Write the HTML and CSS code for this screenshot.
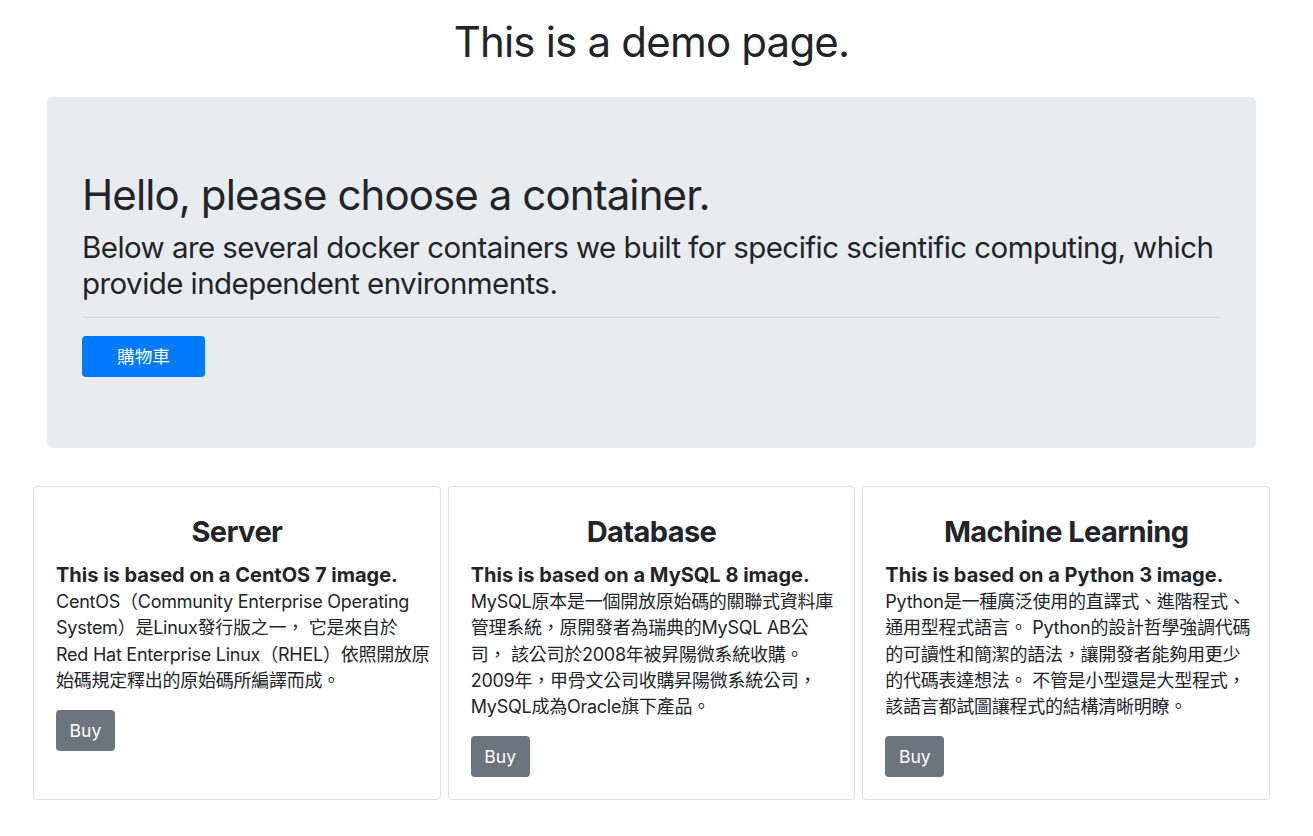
FILE: index.html
```html
<!DOCTYPE html>
<html lang="zh-Hant">
<head>
<meta charset="utf-8">
<title>Demo</title>
<link rel="stylesheet" href="styles.css">
</head>
<body>
<div class="page">
  <h1 class="page-title">This is a demo page.</h1>
  <section class="jumbotron">
    <h1 class="hero-title">Hello, please choose a container.</h1>
    <p class="lead">Below are several docker containers we built for specific scientific computing, which provide independent environments.</p>
    <hr class="divider">
    <a class="btn btn-primary" href="#">購物車</a>
  </section>
  <div class="cards">
    <div class="card">
      <h3 class="card-title">Server</h3>
      <h5 class="card-subtitle">This is based on a CentOS 7 image.</h5>
      <p class="card-text">CentOS（Community Enterprise Operating<br>System）是Linux發行版之一， 它是來自於<br>Red Hat Enterprise Linux（RHEL）依照開放原<br>始碼規定釋出的原始碼所編譯而成。</p>
      <a class="btn btn-secondary" href="#">Buy</a>
    </div>
    <div class="card">
      <h3 class="card-title">Database</h3>
      <h5 class="card-subtitle">This is based on a MySQL 8 image.</h5>
      <p class="card-text">MySQL原本是一個開放原始碼的關聯式資料庫<br>管理系統，原開發者為瑞典的MySQL AB公<br>司， 該公司於2008年被昇陽微系統收購。<br>2009年，甲骨文公司收購昇陽微系統公司，<br>MySQL成為Oracle旗下產品。</p>
      <a class="btn btn-secondary" href="#">Buy</a>
    </div>
    <div class="card">
      <h3 class="card-title">Machine Learning</h3>
      <h5 class="card-subtitle">This is based on a Python 3 image.</h5>
      <p class="card-text">Python是一種廣泛使用的直譯式、進階程式、<br>通用型程式語言。 Python的設計哲學強調代碼<br>的可讀性和簡潔的語法，讓開發者能夠用更少<br>的代碼表達想法。 不管是小型還是大型程式，<br>該語言都試圖讓程式的結構清晰明瞭。</p>
      <a class="btn btn-secondary" href="#">Buy</a>
    </div>
  </div>
</div>
</body>
</html>
```
FILE: styles.css
```css
* { box-sizing: border-box; }
body {
  margin: 0;
  font-family: Inter, "Noto Sans CJK TC", sans-serif;
  color: #212529;
  background: #fff;
}
.page {
  width: 1237px;
  margin-left: 33px;
  padding-bottom: 30px;
}
.page-title {
  font-size: 42px;
  font-weight: 400;
  letter-spacing: -0.8px;
  text-align: center;
  line-height: 48px;
  margin: 18px 0 31px;
}
.jumbotron {
  margin: 0 14px;
  background: #e9ecef;
  border-radius: 5px;
  padding: 74px 35px 71px;
}
.hero-title {
  font-size: 42px;
  font-weight: 400;
  letter-spacing: -0.9px;
  line-height: 48px;
  margin: 0 0 10px;
}
.lead {
  font-size: 29.5px;
  letter-spacing: -0.56px;
  line-height: 36px;
  margin: 0;
}
.divider {
  border: 0;
  border-top: 1px solid rgba(0,0,0,0.1);
  margin: 16px 0 18px;
}
.btn {
  display: inline-block;
  font-size: 17.6px;
  line-height: 27px;
  text-decoration: none;
  color: #fff;
  border-radius: 4px;
  text-align: center;
  padding: 7px 0;
}
.btn-primary {
  background: #007bff;
  width: 123px;
}
.btn-secondary {
  background: #6c757d;
  width: 59px;
}
.cards {
  display: flex;
  gap: 7px;
  margin-top: 38px;
}
.card {
  flex: 1 1 0;
  min-width: 0;
  border: 1px solid rgba(0,0,0,0.125);
  border-radius: 4px;
  padding: 28px 22px 22px;
}
.card-title {
  font-size: 29px;
  font-weight: 700;
  letter-spacing: -0.6px;
  text-align: center;
  line-height: 34px;
  margin: 0 0 14px;
}
.card-subtitle {
  font-size: 20px;
  font-weight: 700;
  line-height: 24px;
  margin: 0 0 2px;
}
.card-text {
  font-size: 18px;
  letter-spacing: -0.25px;
  line-height: 26.3px;
  margin: 0 0 16px;
  white-space: nowrap;
}
```
